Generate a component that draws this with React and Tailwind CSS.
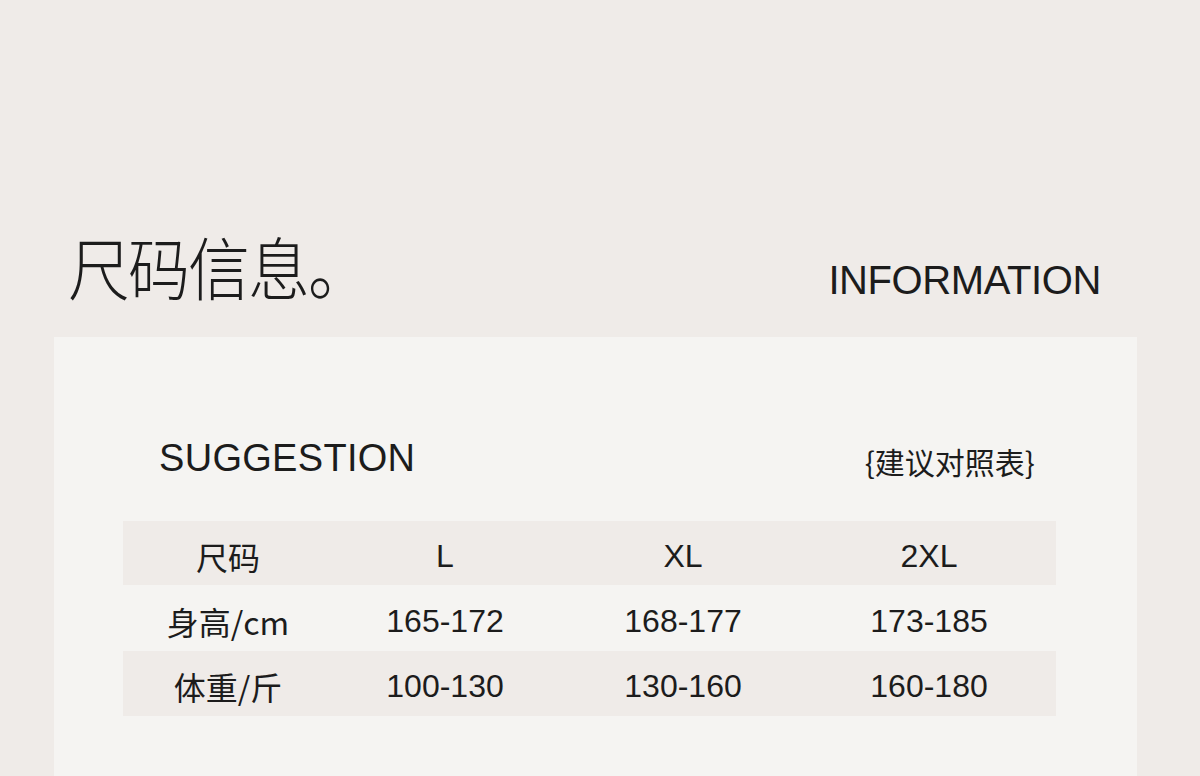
const cjk = { fontFamily: '"Noto Sans CJK SC", "Noto Sans", sans-serif' };
const latin = { fontFamily: '"Liberation Sans", Arial, sans-serif' };

const rows = [
  { label: '尺码', cells: ['L', 'XL', '2XL'], shade: true, h: 'h-[64px]' },
  { label: '身高/cm', cells: ['165-172', '168-177', '173-185'], shade: false, h: 'h-[66px]' },
  { label: '体重/斤', cells: ['100-130', '130-160', '160-180'], shade: true, h: 'h-[65px]' },
];

function SizeRow({ label, cells, shade, h }) {
  return (
    <div
      className={`grid grid-cols-[210px_224px_252px_1fr] items-center pt-[5px] pr-[7px] ${h} ${
        shade ? 'bg-[#efebe8]' : ''
      } text-[#1c1c1c]`}
    >
      <div className="text-center text-[32px] leading-none" style={cjk}>
        {label}
      </div>
      {cells.map((c) => (
        <div key={c} className="text-center text-[32px] leading-none" style={latin}>
          {c}
        </div>
      ))}
    </div>
  );
}

export default function App() {
  return (
    <div className="h-[776px] overflow-hidden bg-[#efebe8] pt-[222px] text-[#1c1c1c]">
      <div className="flex items-end justify-between pl-[68px] pr-[99px] h-[80px]">
        <h1
          className="text-[62px] leading-none tracking-[-2px] font-light scale-y-110 origin-bottom pb-[2px]"
          style={cjk}
        >
          尺码信息。
        </h1>
        <div className="text-[40px] leading-none tracking-[-0.4px] pb-[2px]" style={latin}>
          INFORMATION
        </div>
      </div>

      <div className="mt-[35px] ml-[54px] w-[1083px] h-[600px] bg-[#f5f4f2] pt-[102px]">
        <div className="flex items-center justify-between pl-[105px] pr-[102px]">
          <div className="text-[38px] leading-none tracking-[0.3px]" style={latin}>
            SUGGESTION
          </div>
          <div className="text-[30px] leading-none pt-[6px]" style={cjk}>
            {'{建议对照表}'}
          </div>
        </div>

        <div className="mt-[44px] ml-[69px] w-[933px]">
          {rows.map((r) => (
            <SizeRow key={r.label} {...r} />
          ))}
        </div>
      </div>
    </div>
  );
}
